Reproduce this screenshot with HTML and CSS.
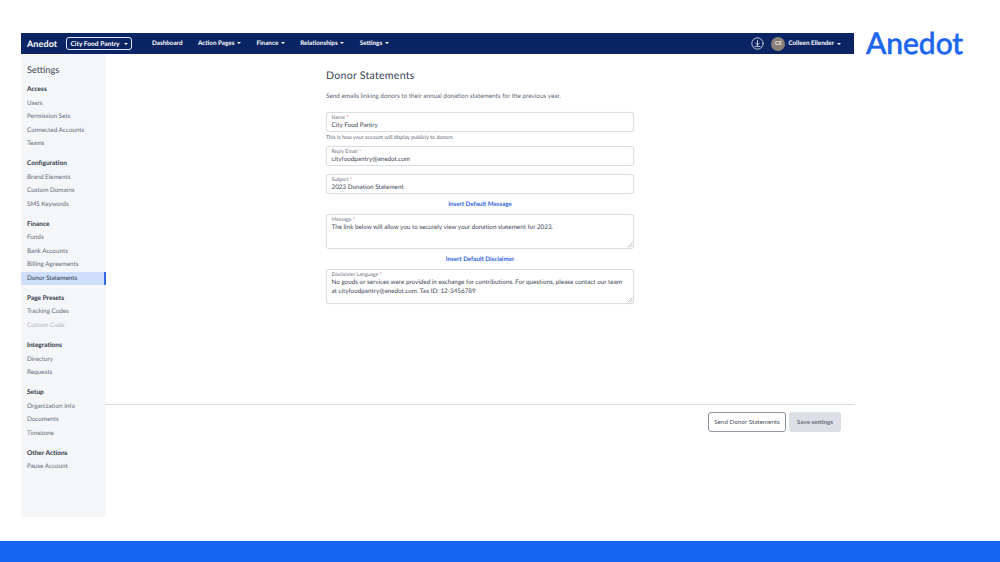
FILE: index.html
```html
<!DOCTYPE html>
<html lang="en">
<head>
<meta charset="utf-8">
<title>Donor Statements</title>
<link rel="stylesheet" href="styles.css">
</head>
<body>
<div class="page">
  <div class="stage">
    <div class="app">
      <header class="navbar">
        <span class="nav-logo">Anedot</span>
        <span class="org-select">City Food Pantry <i class="caret"></i></span>
        <nav class="nav-links">
          <a>Dashboard</a>
          <a>Action Pages <i class="caret"></i></a>
          <a>Finance <i class="caret"></i></a>
          <a>Relationships <i class="caret"></i></a>
          <a>Settings <i class="caret"></i></a>
        </nav>
        <div class="nav-user">
          <svg class="download" viewBox="0 0 14 14" width="13" height="13" fill="none" stroke="#fff" stroke-width="0.8" stroke-linecap="round" stroke-linejoin="round">
            <circle cx="7" cy="7" r="6.1"/>
            <path d="M7 3.6v5M5 6.8l2 1.9 2-1.9M4.4 10.2h5.2"/>
          </svg>
          <span class="avatar">CE</span>
          <span class="user-name">Colleen Ellender</span>
          <i class="caret user-caret"></i>
        </div>
      </header>
      <div class="body-row">
        <aside class="sidebar">
          <h2 class="side-title">Settings</h2>
          <div class="side-group">
            <h3>Access</h3>
            <a>Users</a><a>Permission Sets</a><a>Connected Accounts</a><a>Teams</a>
          </div>
          <div class="side-group">
            <h3>Configuration</h3>
            <a>Brand Elements</a><a>Custom Domains</a><a>SMS Keywords</a>
          </div>
          <div class="side-group">
            <h3>Finance</h3>
            <a>Funds</a><a>Bank Accounts</a><a>Billing Agreements</a><a class="active">Donor Statements</a>
          </div>
          <div class="side-group">
            <h3>Page Presets</h3>
            <a>Tracking Codes</a><a class="disabled">Custom Code</a>
          </div>
          <div class="side-group">
            <h3>Integrations</h3>
            <a>Directory</a><a>Requests</a>
          </div>
          <div class="side-group">
            <h3>Setup</h3>
            <a>Organization Info</a><a>Documents</a><a>Timezone</a>
          </div>
          <div class="side-group">
            <h3>Other Actions</h3>
            <a>Pause Account</a>
          </div>
        </aside>
        <main class="main">
          <div class="content">
            <form class="form">
              <h1>Donor Statements</h1>
              <p class="lead">Send emails linking donors to their annual donation statements for the previous year.</p>
              <div class="field">
                <label>Name <b>*</b></label>
                <div class="value">City Food Pantry</div>
              </div>
              <p class="hint">This is how your account will display publicly to donors.</p>
              <div class="field field-email">
                <label>Reply Email <b>*</b></label>
                <div class="value">cityfoodpantry@anedot.com</div>
              </div>
              <div class="field field-subject">
                <label>Subject <b>*</b></label>
                <div class="value">2023 Donation Statement</div>
              </div>
              <a class="insert">Insert Default Message</a>
              <div class="field area">
                <label>Message <b>*</b></label>
                <div class="value">The link below will allow you to securely view your donation statement for 2023.</div>
                <svg class="grip" viewBox="0 0 6 6" width="6" height="6" stroke="#8d929b" stroke-width="0.6"><path d="M0.5 5.5l5-5M3 5.5l2.5-2.5"/></svg>
              </div>
              <a class="insert">Insert Default Disclaimer</a>
              <div class="field area">
                <label>Disclaimer Language <b>*</b></label>
                <div class="value">No goods or services were provided in exchange for contributions. For questions, please contact our team at cityfoodpantry@anedot.com. Tax ID: 12-3456789</div>
                <svg class="grip" viewBox="0 0 6 6" width="6" height="6" stroke="#8d929b" stroke-width="0.6"><path d="M0.5 5.5l5-5M3 5.5l2.5-2.5"/></svg>
              </div>
            </form>
          </div>
          <footer class="actions">
            <button type="button" class="btn btn-outline">Send Donor Statements</button>
            <button type="button" class="btn btn-muted">Save settings</button>
          </footer>
        </main>
      </div>
    </div>
    <div class="brand">Anedot</div>
  </div>
  <div class="bottom-bar"></div>
</div>
</body>
</html>
```
FILE: styles.css
```css
* { box-sizing: border-box; }
html, body { margin: 0; padding: 0; }
body {
  background: #fff;
  font-family: "Lato", "Noto Sans", sans-serif;
  color: #3e4657;
  text-rendering: geometricPrecision;
}
.page { display: flex; flex-direction: column; width: 1000px; height: 562px; overflow: hidden; }
.stage { flex: 1; display: flex; align-items: stretch; padding: 33px 0 24px 21px; min-height: 0; }
.app { width: 833px; display: flex; flex-direction: column; }
.bottom-bar { height: 21px; background: #1763f2; }
.brand {
  margin: -7px 0 0 12px;
  font-size: 30px;
  line-height: 34px;
  font-weight: 400;
  color: #1b66ec;
  -webkit-text-stroke: 0.7px #1b66ec;
}

.navbar {
  height: 21px;
  background: #0b2463;
  color: #fff;
  display: flex;
  align-items: center;
  padding: 0 13px 0 6px;
  font-size: 6.3px;
  font-weight: 700;
}
.nav-logo { width: 39px; font-size: 9px; font-weight: 700; letter-spacing: 0.1px; }
.org-select {
  width: 66px;
  height: 13px;
  display: flex;
  align-items: center;
  justify-content: center;
  gap: 3px;
  border: 1px solid #dfe5f2;
  border-radius: 3px;
  font-size: 6.6px;
}
.caret {
  display: inline-block;
  width: 0;
  height: 0;
  border-left: 2px solid transparent;
  border-right: 2px solid transparent;
  border-top: 2px solid #fff;
  margin-left: 1px;
  vertical-align: middle;
}
.nav-links { display: flex; gap: 15.5px; margin-left: 20px; }
.nav-user { margin-left: auto; display: flex; align-items: center; }
.download { display: block; margin-right: 7px; }
.avatar {
  width: 14px;
  height: 14px;
  border-radius: 50%;
  background: #8b8078;
  color: #f1eeea;
  font-size: 5.5px;
  display: flex;
  align-items: center;
  justify-content: center;
  margin-right: 3px;
}
.user-caret { margin-left: 3px; }

.body-row { flex: 1; display: flex; min-height: 0; }
.sidebar { width: 85px; background: #f4f6f8; padding: 8px 0 0; }
.side-title { margin: 0 0 6.3px 6px; font-size: 9.2px; line-height: 15px; font-weight: 400; color: #3e4657; }
.side-group { margin-bottom: 7px; }
.side-group h3 {
  margin: 0;
  padding-left: 6px;
  font-size: 6.5px;
  line-height: 13.4px;
  font-weight: 700;
  color: #2e3547;
}
.side-group a {
  display: block;
  padding-left: 6px;
  font-size: 6.3px;
  line-height: 13.4px;
  color: #646c7c;
}
.side-group a.active {
  background: #cfdffb;
  color: #2e3547;
  box-shadow: inset -2px 0 0 #2f6ae0;
}
.side-group a.disabled { color: #b4b9c2; }

.main { flex: 1; display: flex; flex-direction: column; min-width: 0; }
.content { flex: 1; padding: 0 0 0 220px; }
.form { width: 308px; display: flex; flex-direction: column; }
.form h1 { margin: 15px 0 0; font-size: 10.6px; line-height: 14px; font-weight: 400; color: #3a4254; letter-spacing: 0.25px; }
.lead { margin: 9px 0 10px; font-size: 6.35px; line-height: 10px; color: #5d6576; }
.field {
  position: relative;
  height: 20px;
  border: 1px solid #d9dce2;
  border-radius: 3px;
  background: #fff;
  padding: 1.5px 4.5px 0;
  box-shadow: 0 0 1px rgba(60, 70, 90, .12);
}
.field label { display: block; font-size: 5.2px; line-height: 6px; color: #6a7180; }
.field label b { color: #d8434e; font-weight: 400; }
.field .value { margin-top: 1.5px; font-size: 6.3px; line-height: 8.5px; color: #3e4657; }
.hint { margin: 2.5px 0 4.5px; font-size: 5.3px; line-height: 7px; color: #5d6576; }
.field-subject { margin-top: 8px; }
.insert {
  display: block;
  text-align: center;
  font-size: 6.2px;
  line-height: 9px;
  font-weight: 700;
  color: #2f62e0;
  margin: 6px 0 5px;
}
.area { height: 35px; }
.grip { position: absolute; right: 0; bottom: 0; }

.actions {
  height: 113px;
  border-top: 1px solid #d9dbdf;
  display: flex;
  justify-content: flex-end;
  align-items: flex-start;
  gap: 3px;
  padding: 7px 13px 0 0;
}
.btn {
  height: 19.5px;
  border-radius: 3px;
  font-family: inherit;
  font-size: 6.3px;
  padding: 0;
  color: #4b5365;
}
.btn-outline { width: 78px; background: #fff; border: 1px solid #8e94a0; }
.btn-muted { width: 52px; background: #dcdfe5; border: 0; font-weight: 700; font-size: 6.2px; color: #6a7180; }
```
